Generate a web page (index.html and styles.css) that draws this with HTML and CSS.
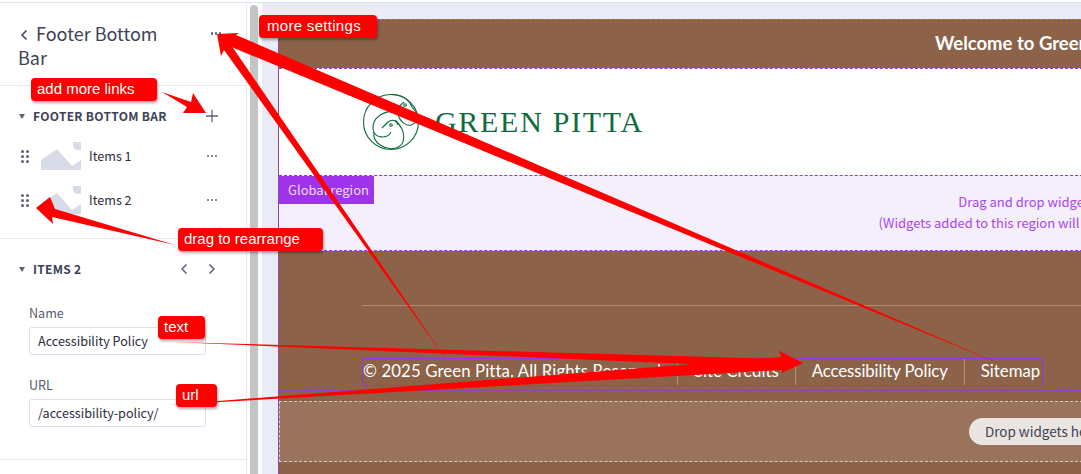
FILE: index.html
```html
<!DOCTYPE html>
<html lang="en">
<head>
<meta charset="utf-8">
<title>Footer Bottom Bar</title>
<link rel="stylesheet" href="styles.css">
</head>
<body>
<div class="app">
  <aside class="sidebar">
    <header class="side-head">
      <h1 class="side-title"><svg class="back" viewBox="0 0 8 12" width="8" height="12"><path d="M6.5 1.5 2 6l4.500 4.500"/></svg>Footer Bottom Bar</h1>
      <span class="dots dots-head"><i></i><i></i><i></i></span>
    </header>
    <section class="panel panel-list">
      <div class="panel-head">
        <span class="caret"></span>
        <h2 class="panel-title">FOOTER BOTTOM BAR</h2>
        <svg class="plus" viewBox="0 0 12 12" width="12" height="12"><path d="M6 0v12M0 6h12"/></svg>
      </div>
      <ul class="items">
        <li class="item">
          <span class="grip"><i></i><i></i><i></i><i></i><i></i><i></i></span>
          <svg class="thumb" viewBox="0 0 40 28" width="40" height="28"><path d="M0 18 16 7l15 17 9-6v10H0z"/><path d="M32 0h8v8h-3a5 5 0 0 1-5-5z"/></svg>
          <span class="item-name">Items 1</span>
          <span class="dots"><i></i><i></i><i></i></span>
        </li>
        <li class="item">
          <span class="grip"><i></i><i></i><i></i><i></i><i></i><i></i></span>
          <svg class="thumb" viewBox="0 0 40 28" width="40" height="28"><path d="M0 18 16 7l15 17 9-6v10H0z"/><path d="M32 0h8v8h-3a5 5 0 0 1-5-5z"/></svg>
          <span class="item-name">Items 2</span>
          <span class="dots"><i></i><i></i><i></i></span>
        </li>
      </ul>
    </section>
    <section class="panel panel-form">
      <div class="panel-head">
        <span class="caret"></span>
        <h2 class="panel-title">ITEMS 2</h2>
        <svg class="nav" viewBox="0 0 8 12" width="8" height="12"><path d="M6.500 1.500 2 6l4.500 4.500"/></svg>
        <svg class="nav nav-next" viewBox="0 0 8 12" width="8" height="12"><path d="M1.500 1.500 6 6l-4.500 4.500"/></svg>
      </div>
      <label class="field field-first">
        <span class="field-label">Name</span>
        <span class="field-input">Accessibility Policy</span>
      </label>
      <label class="field">
        <span class="field-label">URL</span>
        <span class="field-input">/accessibility-policy/</span>
      </label>
    </section>
  </aside>
  <div class="scrollbar"><div class="thumb-bar"></div></div>
  <main class="canvas">
    <div class="page">
      <div class="topbar">Welcome to Green Pitta</div>
      <div class="brand">
        <svg class="mark" viewBox="0 0 58 58" width="58" height="58">
          <circle cx="29" cy="29" r="27.500"/>
          <path d="M36 22C39 30 47 37 55 28"/>
          <path d="M36 22C35 17 38 12 42 9"/>
          <path d="M28 1.500C40 1 47 7 50 14L56 22"/>
          <path d="M11 36C10 25 22 16 37 19"/>
          <path d="M20 35 26 29C30 26 35 27 36 32"/>
          <path d="M11 36C12 46 26 46 29 39"/>
          <path d="M12 39C10 50 24 58 34 55 44 52 45 38 33 27"/>
          <circle cx="29" cy="32" r="1.300"/>
          <circle cx="43" cy="12" r="1.300"/>
        </svg>
        <span class="wordmark">GREEN PITTA</span>
      </div>
      <div class="region">
        <span class="region-badge">Global region</span>
        <p class="region-text">Drag and drop widgets here</p>
        <p class="region-text">(Widgets added to this region will appear on all pages)</p>
      </div>
      <footer class="footer">
        <div class="rule"></div>
        <nav class="links">
          <span class="link link-first">© 2025 Green Pitta. All Rights Reserved</span>
          <span class="link">Site Credits</span>
          <span class="link link-access">Accessibility Policy</span>
          <span class="link link-last">Sitemap</span>
        </nav>
      </footer>
      <div class="foot-region">
        <div class="dropzone"><span class="pill">Drop widgets here</span></div>
      </div>
    </div>
  </main>
</div>
<svg class="arrows" viewBox="0 0 1081 474" width="1081" height="474">
  <polygon points="1005,366 236,35 239,33 217,34 232,51 229,46"/>
  <polygon points="448,362 231,45 236,45 217,34 221,56 224,50"/>
  <polygon points="162,92 191,102 193,93 206,113 183,113 187,107"/>
  <polygon points="175,245 55,209 50,197 36,208 53,224 52,217"/>
  <polygon points="172,342 782,359 779,351 803,363 782,372 782,368"/>
  <polygon points="168,405 782,357 779,351 803,363 782,373 782,370"/>
</svg>
<span class="note note-more">more settings</span>
<span class="note note-add">add more links</span>
<span class="note note-drag">drag to rearrange</span>
<span class="note note-text">text</span>
<span class="note note-url">url</span>
</body>
</html>
```

FILE: styles.css
```css
* { box-sizing: border-box; }
html, body { margin: 0; height: 100%; }
body {
  position: relative;
  width: 1081px;
  height: 474px;
  overflow: hidden;
  background: #fff;
  font-family: "Noto Sans CJK SC", "Source Sans Pro", "Noto Sans", sans-serif;
  color: #3d4256;
}
.app {
  display: flex;
  height: 474px;
  margin-top: 2px;
  border-top: 1px solid #dfe2ee;
}
.sidebar {
  width: 247px;
  flex: none;
  border-right: 1px solid #e8eaf2;
  background: #fff;
}
.side-head {
  display: flex;
  justify-content: space-between;
  align-items: flex-start;
  height: 83px;
  padding: 18px 25px 0 18px;
  border-bottom: 1px solid #e8eaf2;
}
.side-title {
  width: 170px;
  margin: 0;
  font-size: 18px;
  font-weight: 400;
  line-height: 24px;
  color: #3d4256;
}
.back {
  margin: 0 8px 0 2px;
  fill: none;
  stroke: #3d4256;
  stroke-width: 1.500;
}
.dots { display: flex; gap: 1.500px; }
.dots i {
  width: 2.500px;
  height: 2.500px;
  border-radius: 50%;
  background: #5b6178;
}
.dots-head { margin-top: 11px; }
.panel { border-bottom: 1px solid #e8eaf2; padding-top: 20px; }
.panel-list { height: 153px; }
.panel-form { height: 221px; }
.panel-head {
  display: flex;
  align-items: center;
  height: 20px;
  padding: 0 29px 0 19px;
}
.caret {
  width: 0;
  height: 0;
  margin-right: 8px;
  border-left: 3.500px solid transparent;
  border-right: 3.500px solid transparent;
  border-top: 5px solid #5b6178;
}
.panel-title {
  flex: 1;
  margin: 0;
  font-size: 12px;
  font-weight: 700;
  line-height: 20px;
  letter-spacing: .3px;
  color: #3d4256;
}
.plus { margin-right: -1px; fill: none; stroke: #5b6178; stroke-width: 1.300; }
.nav { fill: none; stroke: #5b6178; stroke-width: 1.500; }
.nav-next { margin: 0 1px 0 20px; }
.items { list-style: none; margin: 8px 0 0; padding: 0; }
.item {
  display: flex;
  align-items: center;
  height: 44px;
  padding: 0 29px 0 21px;
}
.grip {
  display: grid;
  grid-template-columns: 3px 3px;
  gap: 2px;
  width: 8px;
  margin-right: 12px;
}
.grip i { width: 3px; height: 3px; border-radius: 50%; background: #5b6178; }
.thumb { fill: #d7dbe7; flex: none; }
.item-name {
  flex: 1;
  margin-left: 8px;
  font-size: 12.600px;
  line-height: 18px;
  color: #2a2d3a;
}
.field { display: block; margin: 21px 40px 0 29px; }
.field-first { margin-top: 25px; }
.field-label {
  display: block;
  height: 18px;
  font-size: 12.600px;
  line-height: 18px;
  color: #565b6e;
}
.field-input {
  display: block;
  height: 28px;
  margin-top: 5px;
  padding: 0 8px;
  border: 1px solid #dadded;
  border-radius: 3px;
  font-size: 12.600px;
  line-height: 26px;
  color: #2a2d3a;
}
.scrollbar {
  flex: none;
  width: 15px;
  padding: 2px 4px 0 3px;
  background: #fff;
}
.thumb-bar {
  height: 100%;
  border-radius: 4px 4px 0 0;
  background: #c4c4c4;
}
.canvas {
  flex: 1;
  min-width: 0;
  overflow: hidden;
  padding: 16px 0 0 16px;
  background: #e9ebf5;
}
.page {
  width: 1526px;
  border-left: 1px dashed #9333ea;
  background: #8c6249;
}
.topbar {
  height: 49px;
  padding-right: 16px;
  border-top: 1px dashed #a855f7;
  font-family: Lato, sans-serif;
  font-size: 18.500px;
  font-weight: 700;
  line-height: 47px;
  text-align: center;
  color: #fff;
}
.brand {
  display: flex;
  align-items: center;
  gap: 15px;
  height: 107px;
  padding-left: 83px;
  border-top: 1px dashed #9333ea;
  background: #fff;
}
.mark { fill: none; stroke: #0e6b3d; stroke-width: 1.100; flex: none; }
.wordmark {
  font-family: "Liberation Serif", serif;
  font-size: 30px;
  letter-spacing: 1.700px;
  line-height: 30px;
  color: #0e6b3d;
}
.region {
  position: relative;
  height: 76px;
  padding-top: 15px;
  border-top: 1px dashed #9333ea;
  border-bottom: 1px dashed #9333ea;
  background: #f5effc;
}
.region-badge {
  position: absolute;
  top: 0;
  left: 0;
  width: 95px;
  height: 28px;
  padding-left: 9px;
  font-size: 13px;
  line-height: 28px;
  white-space: nowrap;
  color: #ecdcfc;
  background: #9e33ea;
}
.region-text {
  margin: 0;
  font-size: 13px;
  line-height: 21px;
  text-align: center;
  color: #a845ec;
}
.footer { height: 139px; padding: 54px 84px 0 83px; }
.rule { height: 1px; background: #b98a6f; }
.links {
  display: inline-flex;
  height: 28px;
  margin-top: 52px;
  border: 1px solid #9333ea;
  font-family: Lato, sans-serif;
  font-size: 16.800px;
  line-height: 24px;
  color: #fff;
}
.link {
  padding: 0 16px;
  border-right: 1px solid #c58f6d;
  white-space: nowrap;
}
.link-first { padding-left: 0; letter-spacing: .1px; }
.link-access { letter-spacing: -.1px; }
.link-last { padding-right: 2px; border-right: 0; }
.foot-region {
  height: 84px;
  padding-top: 10px;
  border-top: 1px dashed #9333ea;
}
.dropzone {
  display: flex;
  align-items: center;
  justify-content: center;
  height: 61px;
  border-top: 1px dashed #d8c8bf;
  border-bottom: 1px dashed #d8c8bf;
  border-left: 1px dashed #d8c8bf;
  background: #9a735d;
}
.pill {
  height: 27px;
  padding: 0 16px;
  border-radius: 14px;
  font-size: 13.500px;
  line-height: 26px;
  color: #3d4256;
  background: #ebe5e2;
}
.arrows { position: absolute; top: 0; left: 0; fill: #f00; }
.note {
  position: absolute;
  height: 23px;
  padding: 0 6px;
  border-radius: 4px;
  font-family: "Liberation Sans", Arial, sans-serif;
  font-size: 15px;
  line-height: 22px;
  color: #fff;
  background: #f00;
  box-shadow: 1px 2px 3px rgba(0, 0, 0, .35);
}
.note-more { top: 15px; left: 259px; width: 118px; padding-left: 8px; letter-spacing: .3px; }
.note-add { top: 78px; left: 31px; width: 126px; }
.note-drag { top: 228px; left: 178px; width: 145px; }
.note-text { top: 316px; left: 158px; width: 47px; }
.note-url { top: 384px; left: 176px; width: 41px; }
```
